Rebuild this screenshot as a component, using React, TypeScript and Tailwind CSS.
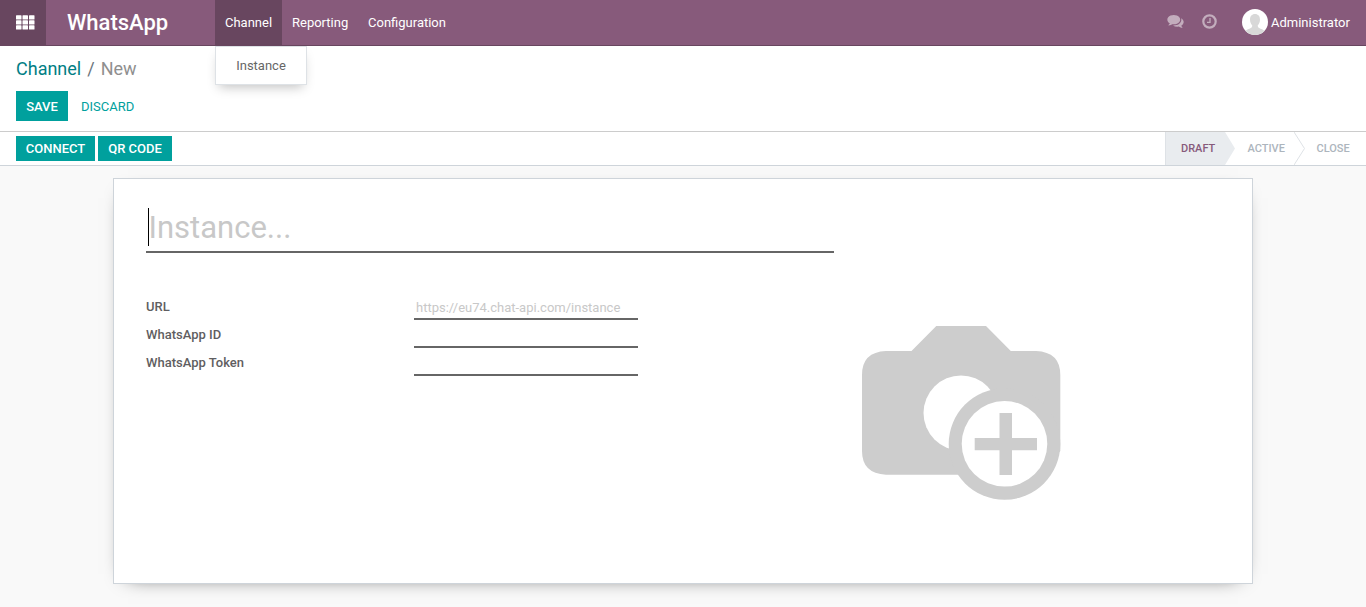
function AppsIcon() {
  return (
    <svg width="19" height="15" viewBox="0 0 19 15" fill="#fff">
      {[0.2, 5.2, 10.2].map((y) =>
        [0, 6.5, 13].map((x) => (
          <rect key={`${x}-${y}`} x={x} y={y} width="5.500" height="4.300" rx="0.6" />
        )),
      )}
    </svg>
  );
}

function ChatIcon() {
  return (
    <svg width="17" height="14" viewBox="0 0 1792 1536" fill="currentColor">
      <path d="M1408 512q0 139-94 257t-256.500 186.500-353.500 68.500q-86 0-176-16-124 88-278 128-36 9-86 16h-3q-11 0-20.500-8t-11.500-21q-1-3-1-6.500t.5-6.500 2-6l2.500-5 3.500-5.500 4-5 4.500-5 4-4.500q5-6 23-25t26-29.500 22.500-29 25-38.500 20.500-44q-124-72-195-177t-71-224q0-139 94-257t256.500-186.500 353.500-68.500 353.500 68.500 256.500 186.500 94 257zm384 256q0 120-71 224.500t-195 176.500q10 24 20.500 44t25 38.500 22.500 29 26 29.500 23 25q1 1 4 4.500t4.500 5 4 5 3.500 5.500l2.500 5 2 6 .5 6.500-1 6.500q-3 14-13 22t-22 7q-50-7-86-16-154-40-278-128-90 16-176 16-271 0-472-132 58 4 88 4 161 0 309-45t264-129q125-92 192-212t67-254q0-77-23-152 129 71 204 178t75 230z" />
    </svg>
  );
}

function ClockIcon() {
  return (
    <svg width="15" height="15" viewBox="0 0 15 15" fill="none" stroke="currentColor">
      <circle cx="7.500" cy="7.500" r="6.200" strokeWidth="2.200" />
      <path d="M8 4v4.300H5" strokeWidth="1.300" />
    </svg>
  );
}

function Avatar() {
  return (
    <svg width="26" height="26" viewBox="0 0 26 26">
      <defs>
        <clipPath id="avatar-clip">
          <circle cx="13" cy="13" r="13" />
        </clipPath>
      </defs>
      <g clipPath="url(#avatar-clip)">
        <rect width="26" height="26" fill="#fff" />
        <path
          d="M13 5c3.200 0 5 2.200 5 5.600 0 2.400-.8 4.500-2.300 6 .1 1.700.8 2.500 2.800 3.100 2.300.7 3.800 1.300 4.300 3.200V26H3.200v-3.100c.5-1.900 2-2.500 4.300-3.200 2-.6 2.700-1.400 2.800-3.100C8.800 15.100 8 13 8 10.600 8 7.200 9.800 5 13 5z"
          fill="#d8d8d8"
        />
      </g>
    </svg>
  );
}

function CameraPlaceholder() {
  return (
    <svg width="200" height="176" viewBox="861 325 200 176" fill="#cdcdcd">
      <path d="M886 351H911.500L936.300 326H986L1010.800 351H1036Q1060.300 352 1060.300 375V451L1040 474.700H886Q862 473.500 862 451V375Q862 352 886 351Z" />
      <circle cx="961" cy="413" r="37.500" fill="#fff" />
      <circle cx="1004.500" cy="444" r="55.800" />
      <circle cx="1004.500" cy="443.800" r="42.800" fill="#fff" />
      <path d="M999.500 413H1012V438H1037V450.200H1012V475H999.500V450.200H974.700V438H999.500Z" />
    </svg>
  );
}

function Navbar() {
  return (
    <nav className="flex h-[46px] border-b border-[#68465f] bg-[#875a7b] text-white">
      <div className="flex w-[46px] items-center bg-[#68465f] pl-4">
        <AppsIcon />
      </div>
      <div className="w-[169px] pl-[21px] text-[22px] leading-[45px] font-medium">WhatsApp</div>
      <div className="relative w-[67px] bg-[#68465f] text-center leading-[45px]">
        Channel
        <div className="absolute top-[46px] left-0 z-10 h-[39px] w-[92px] border border-[#dee2e6] bg-white pt-[9px] text-center leading-5 text-[#666] shadow-[0_6px_12px_-4px_rgba(0,0,0,0.25)]">
          Instance
        </div>
      </div>
      <div className="w-[76px] pl-2.5 leading-[45px]">Reporting</div>
      <div className="w-[98px] pl-2.5 leading-[45px]">Configuration</div>
      <div className="ml-auto flex items-center">
        <span className="mr-[18px] mb-px text-[#c3adbd]"><ChatIcon /></span>
        <span className="mr-[25px] mb-[2px] text-[#c3adbd]"><ClockIcon /></span>
        <span className="mb-px"><Avatar /></span>
        <span className="ml-[3px] w-[95px] leading-[45px]">Administrator</span>
      </div>
    </nav>
  );
}

function StatusBar() {
  return (
    <div className="flex h-[34px] border-b border-[#ced4da] bg-white pl-4 font-medium">
      <div className="flex gap-[3px] pt-1">
        <button className="h-[25px] w-[79px] bg-[#00a09d] text-white">CONNECT</button>
        <button className="h-[25px] w-[74px] bg-[#00a09d] text-white">QR CODE</button>
      </div>
      <div className="ml-auto flex text-[11px] leading-[33px] text-[#adb5bd]">
        <div className="w-[60px] border-l border-[#dee2e6] bg-[#e9ecef] pl-[15px] text-[#875a7b]">DRAFT</div>
        <svg width="11" height="33" viewBox="0 0 11 33">
          <path d="M0 0L10 16.500L0 33Z" fill="#e9ecef" />
        </svg>
        <div className="w-[58px] pl-[11.5px]">ACTIVE</div>
        <svg width="11" height="33" viewBox="0 0 11 33">
          <path d="M0 0L10.500 16.500L0 33" fill="none" stroke="#dee2e6" />
        </svg>
        <div className="w-[61px] pl-[11.5px]">CLOSE</div>
      </div>
    </div>
  );
}

function Field({ label, placeholder }: { label: string; placeholder?: string }) {
  return (
    <div className="flex h-7">
      <label className="w-[268px] leading-[23px] font-medium text-[#5f5e61]">{label}</label>
      <div className="h-[25px] w-56 border-b-2 border-[#666] pl-0.5 leading-[25px] text-[#c8c8c8]">
        {placeholder}
      </div>
    </div>
  );
}

export default function App() {
  return (
    <div className="flex h-[607px] flex-col overflow-hidden bg-[#f9f9f9] font-['Roboto',sans-serif] text-[13px]">
      <Navbar />
      <header className="h-[86px] border-b border-[#ccc] bg-white px-4">
        <div className="flex h-[45px] items-center text-[18px] text-[#017e84]">
          Channel
          <span className="px-[6px] text-[#6c757d]">/</span>
          <span className="text-[#8f8f8f]">New</span>
        </div>
        <div className="flex font-medium">
          <button className="h-[30px] w-[52px] bg-[#00a09d] pt-px text-white">SAVE</button>
          <button className="ml-[13px] pt-px font-normal text-[#00a09d]">DISCARD</button>
        </div>
      </header>
      <StatusBar />
      <main className="mx-auto mt-3 flex h-[406px] w-[1140px] border border-[#ced4da] bg-white pl-8 shadow-[0_5px_20px_-15px_#000]">
        <section className="w-[688px] pt-[29px]">
          <div className="flex h-[45px] border-b-2 border-[#666] pl-0.5 text-[31px] text-[#c8c8c8]">
            <span className="-mr-[0.5px] h-[38px] w-px bg-black" />
            <span className="leading-10">Instance...</span>
          </div>
          <div className="pt-[42px]">
            <Field label="URL" placeholder="https://eu74.chat-api.com/instance" />
            <Field label="WhatsApp ID" />
            <Field label="WhatsApp Token" />
          </div>
        </section>
        <div className="pt-[146px] pl-[27px]">
          <CameraPlaceholder />
        </div>
      </main>
    </div>
  );
}
